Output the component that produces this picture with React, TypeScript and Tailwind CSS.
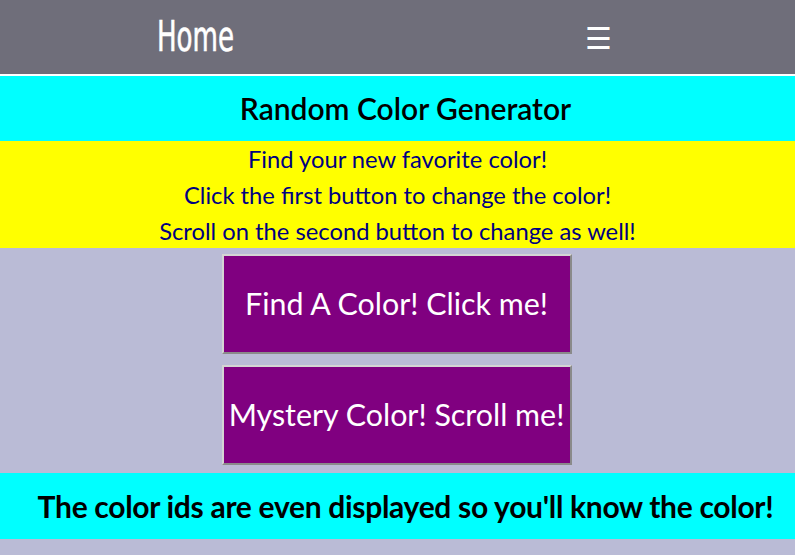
import { useState } from 'react';

const lato = { fontFamily: 'Lato, "Noto Sans", sans-serif' };

const App = () => {
    const [bg] = useState('#babbd6');

    return (
        <div className="min-h-[555px] w-full" style={{ ...lato, backgroundColor: bg }}>
            {/* Nav */}
            <nav className="h-[76px] bg-[#6f6e7a] border-b-2 border-white flex items-center">
                <a
                    className="ml-[157px] text-white text-[42px] leading-none font-medium scale-x-[0.69] origin-left"
                    style={{ fontFamily: '"Liberation Sans Narrow", "DejaVu Sans Condensed", sans-serif', WebkitTextStroke: '0.6px white' }}
                >
                    Home
                </a>
                <span className="ml-auto mr-[183px] text-white text-[30px] leading-none">☰</span>
            </nav>

            {/* Title */}
            <header className="h-[65px] bg-[#00ffff] flex items-center justify-center pl-4">
                <h1 className="text-[30px] font-semibold text-black">Random Color Generator</h1>
            </header>

            {/* Intro */}
            <section className="bg-[#ffff00] text-[#000080] text-[23.75px] leading-[36px] text-center h-[107px]">
                <p>Find your new favorite color!</p>
                <p>Click the first button to change the color!</p>
                <p>Scroll on the second button to change as well!</p>
            </section>

            {/* Buttons */}
            <section className="flex flex-col items-center gap-[11px] pt-[6px] pb-[8px] pr-[2px]">
                <button
                    type="button"
                    className="w-[350px] h-[100px] bg-[#800080] text-white text-[30.4px] border-2 border-t-[#d4d4d4] border-l-[#d4d4d4] border-b-[#8a8a8a] border-r-[#8a8a8a]"
                >
                    Find A Color! Click me!
                </button>
                <button
                    type="button"
                    className="w-[350px] h-[100px] bg-[#800080] text-white text-[30.4px] border-2 border-t-[#d4d4d4] border-l-[#d4d4d4] border-b-[#8a8a8a] border-r-[#8a8a8a]"
                >
                    Mystery Color! Scroll me!
                </button>
            </section>

            {/* Footer note */}
            <footer className="h-[66px] bg-[#00ffff] flex items-center justify-center pl-4">
                <h2 className="text-[30px] font-bold text-black tracking-[-0.3px]">
                    The color ids are even displayed so you'll know the color!
                </h2>
            </footer>
        </div>
    );
};

export default App;
